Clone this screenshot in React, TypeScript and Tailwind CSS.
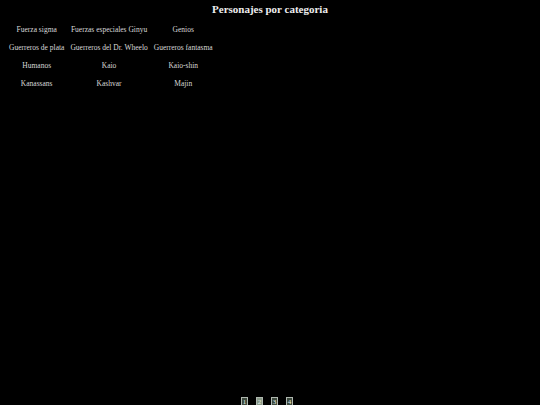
import React from "react";

const rows = [
  ["Fuerza sigma", "Fuerzas especiales Ginyu", "Genios"],
  ["Guerreros de plata", "Guerreros del Dr. Wheelo", "Guerreros fantasma"],
  ["Humanos", "Kaio", "Kaio-shin"],
  ["Kanassans", "Kashvar", "Majin"],
];

export default function App() {
  return (
    <div
      className="h-[405px] w-[540px] overflow-hidden bg-black text-[#d8d8d8]"
      style={{ fontFamily: '"Liberation Serif", "Times New Roman", serif' }}
    >
      <div className="h-[397px]">
        <h1 className="pt-[2px] text-center text-[11px] font-bold leading-[14px] text-[#eeeeee]">
          Personajes por categoria
        </h1>
        <table className="ml-[6px] mt-[5px] border-separate border-spacing-0">
          <tbody>
            {rows.map((r, i) => (
              <tr key={i} className="h-[18px]">
                {r.map((c, j) => (
                  <td key={j} className="px-[3px] text-center text-[7.5px] leading-[18px] whitespace-nowrap">
                    {c}
                  </td>
                ))}
              </tr>
            ))}
          </tbody>
        </table>
      </div>
      <div className="flex justify-center gap-[8px] pr-[6px]">
        {["1", "2", "3", "4"].map((n) => (
          <div
            key={n}
            className={`flex h-[10px] w-[7px] items-center justify-center border border-[#b0b8b0] text-[7px] leading-none text-[#e8f0e8] ${
              n === "2" ? "bg-[#8a9a88]" : "bg-[#3c483c]"
            }`}
          >
            {n}
          </div>
        ))}
      </div>
    </div>
  );
}
